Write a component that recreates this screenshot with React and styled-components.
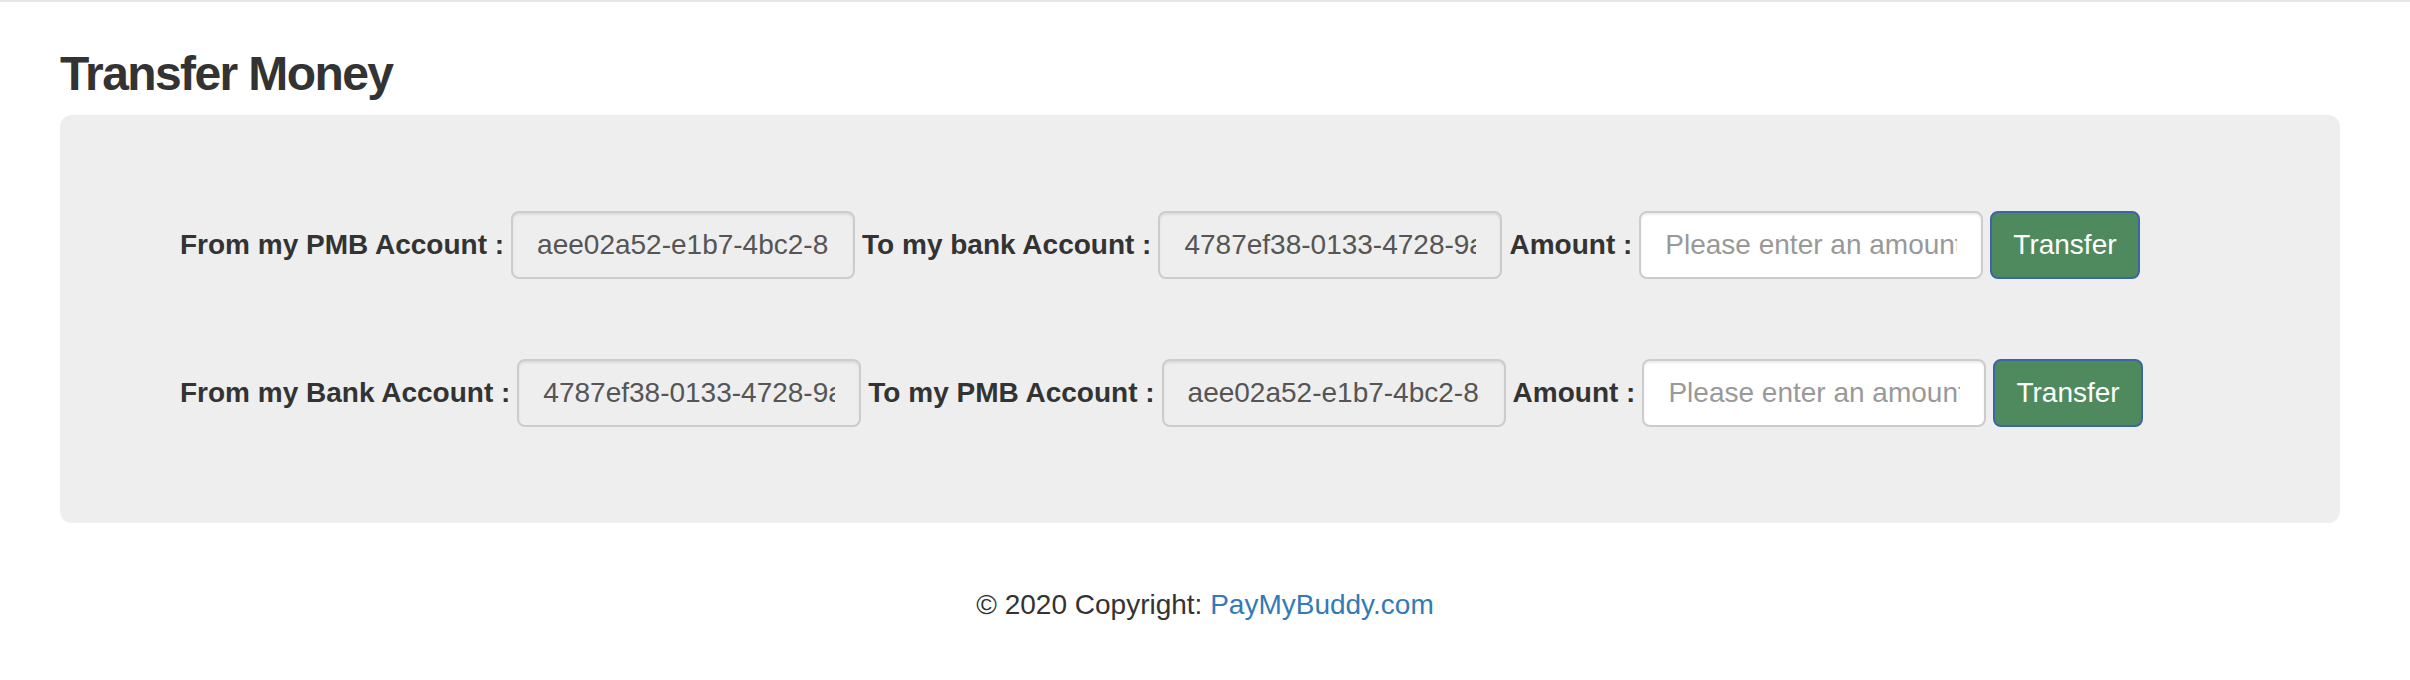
import React from "react";
import styled, { createGlobalStyle } from "styled-components";

const GlobalStyle = createGlobalStyle`
  body {
    margin: 0;
    background: #fff;
    font-family: "Liberation Sans", Arial, sans-serif;
    color: #333;
  }
`;

const TopRule = styled.div`
  height: 2px;
  background: #e5e5e5;
`;

const Container = styled.div`
  padding: 0 70px 0 60px;
`;

const Title = styled.h3`
  margin: 46px 0 14px;
  font-size: 48px;
  line-height: 1.1;
  font-weight: 700;
  letter-spacing: -1.6px;
  color: #333;
`;

const Panel = styled.div`
  background: #eee;
  border-radius: 12px;
  padding: 96px 120px;
  display: flex;
  flex-direction: column;
  gap: 80px;
`;

const Row = styled.form`
  display: flex;
  align-items: center;
  gap: 7px;
  margin: 0;
`;

const Label = styled.label`
  font-size: 28px;
  font-weight: 700;
  color: #333;
  white-space: nowrap;
`;

const Field = styled.input`
  box-sizing: border-box;
  width: 344px;
  height: 68px;
  padding: 12px 24px;
  font-family: "Liberation Sans", Arial, sans-serif;
  font-size: 28px;
  color: #555;
  background: ${p => (p.readOnly ? "#eee" : "#fff")};
  border: 2px solid #ccc;
  border-radius: 8px;
  box-shadow: inset 0 2px 2px rgba(0, 0, 0, 0.075);
  outline: none;

  &::placeholder {
    color: #999;
  }
`;

const Button = styled.button`
  box-sizing: border-box;
  height: 68px;
  padding: 12px 21px;
  font-family: "Liberation Sans", Arial, sans-serif;
  font-size: 28px;
  color: #fff;
  background: #4e8a5d;
  border: 2px solid #3a66a7;
  border-radius: 8px;
`;

const Footer = styled.footer`
  text-align: center;
  font-size: 28px;
  color: #333;
  padding: 66px 0 58px;
`;

const Link = styled.a`
  color: #337ab7;
  text-decoration: none;
`;

const rows = [
  { from: "From my PMB Account :", fromId: "aee02a52-e1b7-4bc2-8a1f", to: "To my bank Account :", toId: "4787ef38-0133-4728-9a3c" },
  { from: "From my Bank Account :", fromId: "4787ef38-0133-4728-9a3c", to: "To my PMB Account :", toId: "aee02a52-e1b7-4bc2-8a1f" },
];

export default function App() {
  return (
    <>
      <GlobalStyle />
      <TopRule />
      <Container>
        <Title>Transfer Money</Title>
        <Panel>
          {rows.map((r, i) => (
            <Row key={i} onSubmit={e => e.preventDefault()}>
              <Label>{r.from}</Label>
              <Field readOnly value={r.fromId} />
              <Label>{r.to}</Label>
              <Field readOnly value={r.toId} />
              <Label>Amount :</Label>
              <Field placeholder="Please enter an amount" />
              <Button type="submit">Transfer</Button>
            </Row>
          ))}
        </Panel>
      </Container>
      <Footer>
        ©&nbsp;2020 Copyright: <Link href="#">PayMyBuddy.com</Link>
      </Footer>
    </>
  );
}
